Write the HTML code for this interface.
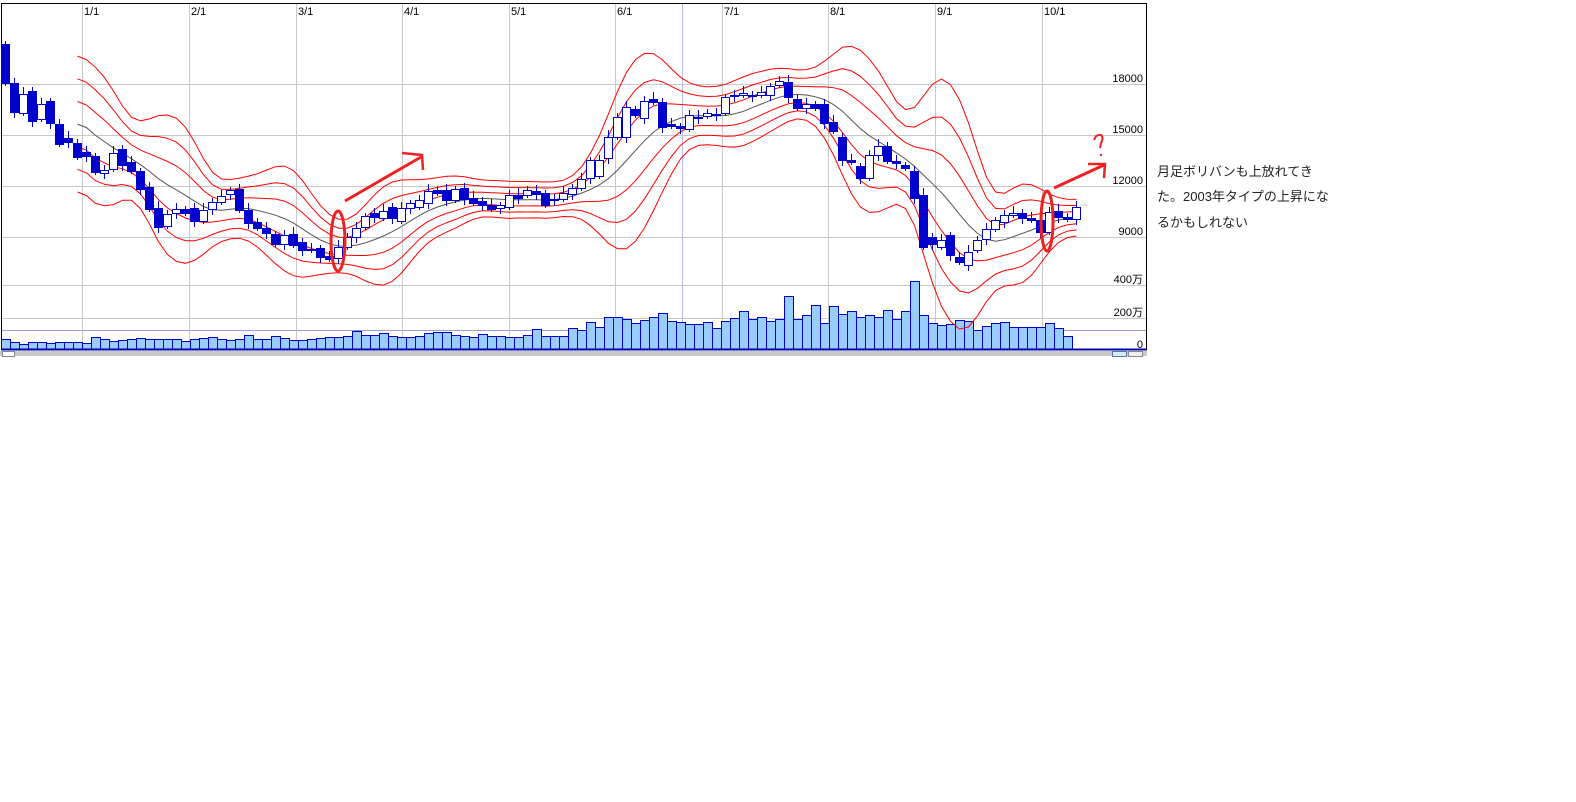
<!DOCTYPE html>
<html><head><meta charset="utf-8">
<style>
html,body{margin:0;padding:0;background:#fff;width:1576px;height:802px;overflow:hidden}
svg{position:absolute;left:0;top:0}
.t{position:absolute;left:1157px;font:13px "Liberation Sans","Noto Sans CJK JP",sans-serif;color:#222;white-space:nowrap}
</style></head><body>
<svg id="c" width="1576" height="802" xmlns="http://www.w3.org/2000/svg"></svg>
<div class="t" style="top:161px">月足ボリバンも上放れてき</div>
<div class="t" style="top:186px">た。2003年タイプの上昇にな</div>
<div class="t" style="top:212px">るかもしれない</div>
<script>
var C=[[44,83,1],[83,112,1],[94,113,0],[91,121,1],[104,119,0],[101,123,1],[124,144,1],[138,142,1],[143,157,1],[152,156,1],[156,172,1],[170,173,0],[153,169,0],[149,165,1],[162,171,1],[171,189,1],[187,209,1],[208,227,1],[214,226,0],[209,213,0],[209,213,1],[208,221,1],[210,221,0],[202,209,0],[196,202,0],[190,194,0],[189,210,1],[210,223,1],[222,228,1],[228,233,1],[234,244,1],[235,244,0],[234,245,1],[242,250,1],[249,250,0],[248,257,1],[256,259,1],[247,258,0],[237,247,0],[228,237,0],[216,227,0],[213,217,1],[211,218,0],[207,218,1],[208,221,0],
[203,208,0],[200,207,0],[191,203,0],[190,193,1],[190,200,1],[189,200,0],[188,199,1],[198,203,1],[201,205,1],[205,209,1],[205,208,0],[195,207,0],[195,198,1],[190,195,0],[191,194,1],[193,205,1],[199,200,0],[193,199,0],[188,194,0],[179,188,0],[160,178,0],[160,176,0],[137,158,0],[117,137,0],[107,137,0],[109,115,1],[101,118,0],[99,102,1],[102,127,1],[124,126,1],[126,128,1],[115,129,0],[117,118,1],[113,116,0],[114,115,0],[97,113,0],[95,96,1],[93,95,0],[95,96,1],[92,95,0],[86,95,0],[81,85,0],[82,97,1],[99,108,1],[104,108,0],[104,108,1],[104,123,1],[122,131,1],[137,160,1],[160,162,1],[166,178,1],[155,178,0],[146,155,0],[146,161,1],[161,163,1],[165,168,1],[171,198,1],[195,247,1],[237,244,1],[240,247,0],[235,255,1],[257,262,1],[252,265,0],[240,250,0],[229,239,0],[220,229,0],[215,222,0],[213,215,0],[213,218,1],[218,220,1],[220,232,1],[212,232,0],[211,217,1],[217,219,1],[207,219,0]];
var V=[339,342,344,342,342,343,342,342,342,343,337,339,341,340,339,338,339,339,339,339,341,339,338,337,339,340,339,335,339,339,336,338,340,340,339,338,337,337,336,331,335,335,333,336,337,
337,336,333,332,332,335,336,337,334,336,336,337,337,335,329,336,336,336,328,330,322,327,317,317,319,323,320,317,313,321,322,324,324,322,328,321,318,311,319,317,
321,319,296,319,315,305,323,306,314,311,317,315,317,310,319,311,281,315,323,325,324,320,321,330,326,323,322,327,327,327,327,323,328,336];
var s='';
s+='<rect x="1.5" y="3.5" width="1145" height="346" fill="#fff" stroke="#000"/>';
[84,135,186,237,285,318].forEach(function(y){s+='<line x1="2" x2="1146" y1="'+(y+.5)+'" y2="'+(y+.5)+'" stroke="#c8c8c8"/>';});
s+='<line x1="2" x2="1146" y1="330.5" y2="330.5" stroke="#9a9ae0"/>';
var gx=[82,189,296,402,509,615,722,828,935,1042],lb=['1/1','2/1','3/1','4/1','5/1','6/1','7/1','8/1','9/1','10/1'];
gx.forEach(function(x,i){s+='<line x1="'+(x+.5)+'" x2="'+(x+.5)+'" y1="4" y2="349" stroke="#c8c8c8"/>';s+='<text x="'+(x+2)+'" y="15" font-size="11" font-family="Liberation Sans" fill="#000">'+lb[i]+'</text>';});
s+='<line x1="682.5" x2="682.5" y1="4" y2="349" stroke="#b8b8ee"/>';
var yl=[['18000',82],['15000',133],['12000',184],['9000',235],['400万',283],['200万',316],['0',348]];
yl.forEach(function(a){s+='<text x="1143" y="'+a[1]+'" text-anchor="end" font-size="11" font-family="Liberation Sans,Noto Sans CJK JP,sans-serif" fill="#000">'+a[0]+'</text>';});
V.forEach(function(y,i){var x=1+9*i;s+='<rect x="'+(x+.5)+'" y="'+(y+.5)+'" width="9" height="'+(349-y)+'" fill="#99ccff" stroke="#0000cc"/>';});
s+='<line x1="1" x2="1147" y1="349.5" y2="349.5" stroke="#0000aa" stroke-width="2"/>';
var cl=C.map(function(c){return c[2]?c[1]:c[0];});
var P=9,M=[],S=[];
for(var i=P-1;i<cl.length;i++){var m=0;for(var j=i-P+1;j<=i;j++)m+=cl[j];m/=P;var v=0;for(j=i-P+1;j<=i;j++)v+=(cl[j]-m)*(cl[j]-m);M.push(m);S.push(Math.sqrt(v/P));}
function sm(a){return a.map(function(_,i){var t=0,n=0;for(var k=-1;k<=1;k++){if(a[i+k]!==undefined){t+=a[i+k];n++;}}return t/n;});}
M=sm(M);S=sm(sm(S));
var L=[[],[],[],[],[],[],[]];
for(i=0;i<M.length;i++){var x=1+9*(i+P-1)+4.5;for(var k=-3;k<=3;k++)L[k+3].push(x.toFixed(1)+','+(M[i]+k*S[i]).toFixed(1));}
L.forEach(function(p,k){s+='<polyline points="'+p.join(' ')+'" fill="none" stroke="'+(k==3?'#555':'#ff0000')+'" stroke-width="1"/>';});
C.forEach(function(c,i){var x=1+9*i,cx=x+4.5,w1=c[0]-3-(i*7%5),w2=c[1]+3+(i*3%6);
s+='<line x1="'+cx+'" x2="'+cx+'" y1="'+w1+'" y2="'+w2+'" stroke="#0000cc"/>';
var h=Math.max(1,c[1]-c[0]);s+='<rect x="'+(x+.5)+'" y="'+(c[0]+.5)+'" width="8" height="'+h+'" fill="'+(c[2]?'#0000cc':'#fff')+'" stroke="#0000cc"/>';});
s+='<ellipse cx="338" cy="241" rx="7" ry="30" fill="none" stroke="#ee2222" stroke-width="3"/>';
s+='<line x1="345" y1="201" x2="421" y2="157" stroke="#ee2222" stroke-width="3"/><polyline points="402,153 422,155 423,170" fill="none" stroke="#ee2222" stroke-width="2.5"/>';
s+='<ellipse cx="1047" cy="221" rx="6" ry="30" fill="none" stroke="#ee2222" stroke-width="3"/>';
s+='<line x1="1054" y1="188" x2="1104" y2="165" stroke="#ee2222" stroke-width="3"/><polyline points="1088,164 1105,164 1104,178" fill="none" stroke="#ee2222" stroke-width="2.5"/>';
s+='<path d="M1094,140 Q1096,134 1101,135 Q1104,138 1101,143 L1100,148" fill="none" stroke="#ee2222" stroke-width="2"/><rect x="1100" y="154" width="2" height="2" fill="#ee2222"/>';
s+='<rect x="0" y="351" width="1147" height="5" fill="#c8c8c8"/><rect x="2.5" y="351.5" width="12" height="5" fill="#fff" stroke="#888"/><rect x="1112.5" y="351.5" width="14" height="5" fill="#dde8f4" stroke="#5577aa"/><rect x="1128.5" y="351.5" width="14" height="5" fill="#eee" stroke="#888"/>';
document.getElementById('c').innerHTML=s;
</script>
</body></html>
